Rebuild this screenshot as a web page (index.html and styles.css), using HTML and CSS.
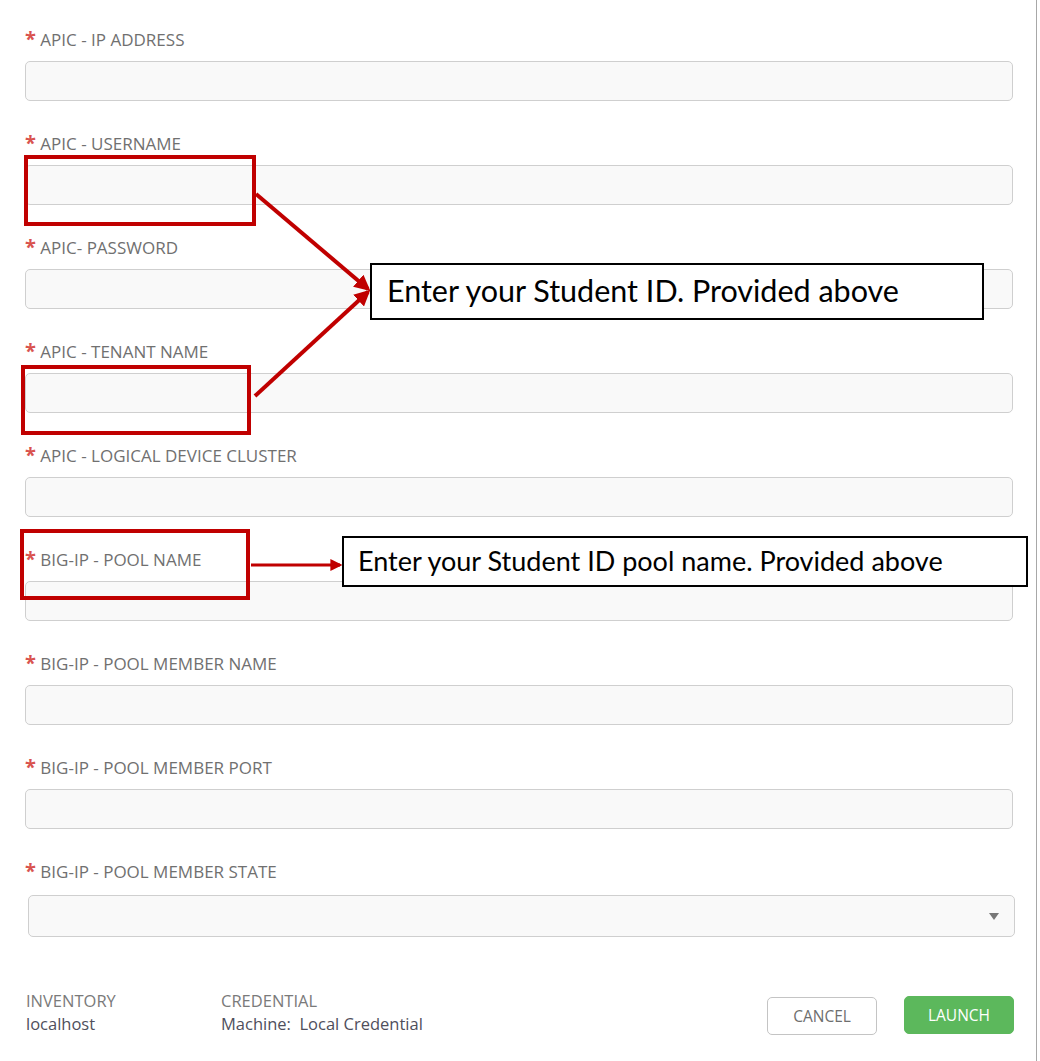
FILE: index.html
```html
<!DOCTYPE html>
<html>
<head>
<meta charset="utf-8">
<link rel="stylesheet" href="styles.css">
</head>
<body>
<div class="page">
  <form class="form">
    <div class="field"><label class="label"><span class="req">*</span> APIC - IP ADDRESS</label><div class="input"></div></div>
    <div class="field"><label class="label"><span class="req">*</span> APIC - USERNAME</label><div class="input"></div></div>
    <div class="field"><label class="label"><span class="req">*</span> APIC- PASSWORD</label><div class="input"></div></div>
    <div class="field"><label class="label"><span class="req">*</span> APIC - TENANT NAME</label><div class="input"></div></div>
    <div class="field"><label class="label"><span class="req">*</span> APIC - LOGICAL DEVICE CLUSTER</label><div class="input"></div></div>
    <div class="field"><label class="label"><span class="req">*</span> BIG-IP - POOL NAME</label><div class="input"></div></div>
    <div class="field"><label class="label"><span class="req">*</span> BIG-IP - POOL MEMBER NAME</label><div class="input"></div></div>
    <div class="field"><label class="label"><span class="req">*</span> BIG-IP - POOL MEMBER PORT</label><div class="input"></div></div>
    <div class="field last"><label class="label"><span class="req">*</span> BIG-IP - POOL MEMBER STATE</label><div class="select"><span class="caret"></span></div></div>
  </form>
  <div class="footer">
    <div class="meta">
      <div class="meta-item"><div class="meta-title">INVENTORY</div><div class="meta-value">localhost</div></div>
      <div class="meta-item"><div class="meta-title">CREDENTIAL</div><div class="meta-value">Machine:&nbsp; Local Credential</div></div>
    </div>
    <div class="buttons">
      <button type="button" class="btn btn-cancel">CANCEL</button>
      <button type="button" class="btn btn-launch">LAUNCH</button>
    </div>
  </div>
</div>

<svg class="annot" width="1040" height="1061" viewBox="0 0 1040 1061">
  <defs>
    <marker id="ah" markerWidth="4" markerHeight="4" refX="3.2" refY="2" orient="auto" markerUnits="strokeWidth">
      <path d="M0,0 L4,2 L0,4 Z" fill="#c00000"/>
    </marker>
  </defs>
  <rect x="26" y="157" width="228" height="67" fill="none" stroke="#c00000" stroke-width="4"/>
  <rect x="23" y="367" width="226" height="66" fill="none" stroke="#c00000" stroke-width="4"/>
  <rect x="22" y="531" width="226" height="67" fill="none" stroke="#c00000" stroke-width="4"/>
  <line x1="256" y1="194" x2="368" y2="289" stroke="#c00000" stroke-width="4" marker-end="url(#ah)"/>
  <line x1="255" y1="396" x2="368" y2="292" stroke="#c00000" stroke-width="4" marker-end="url(#ah)"/>
  <line x1="251" y1="565" x2="340" y2="565" stroke="#c00000" stroke-width="3" marker-end="url(#ah)"/>
</svg>
<div class="note note-1">Enter your Student ID. Provided above</div>
<div class="note note-2">Enter your Student ID pool name. Provided above</div>
</body>
</html>
```
FILE: styles.css
```css
html, body {
  margin: 0;
  padding: 0;
  background: #fff;
}
body {
  font-family: "Open Sans", "Liberation Sans", sans-serif;
  position: relative;
  width: 1040px;
  height: 1061px;
  overflow: hidden;
}
.page {
  width: 1037px;
  height: 1061px;
  border-right: 1px solid #a8a8a8;
  box-sizing: border-box;
  padding: 29px 0 0 25px;
}
.form {
  margin: 0;
  width: 988px;
}
.field {
  margin-bottom: 32px;
}
.field.last {
  margin-bottom: 0;
}
.label {
  display: block;
  font-size: 17px;
  line-height: 22px;
  color: #707070;
  margin-bottom: 10px;
  white-space: nowrap;
}
.req {
  color: #d9534f;
  font-size: 20px;
  font-weight: 700;
  line-height: 0;
}
.input {
  height: 40px;
  box-sizing: border-box;
  border: 1px solid #cfcfcf;
  border-radius: 5px;
  background: #f9f9f9;
}
.select {
  height: 42px;
  box-sizing: border-box;
  margin: 12px 0 0 3px;
  width: 987px;
  border: 1px solid #cfcfcf;
  border-radius: 5px;
  background: #f9f9f9;
  display: flex;
  align-items: center;
  justify-content: flex-end;
  padding-right: 15px;
}
.caret {
  width: 0;
  height: 0;
  border-left: 5px solid transparent;
  border-right: 5px solid transparent;
  border-top: 7px solid #777;
}
.footer {
  margin-top: 52px;
  width: 989px;
  display: flex;
  justify-content: space-between;
  align-items: flex-start;
}
.meta {
  display: flex;
  padding-left: 1px;
}
.meta-item {
  width: 195px;
  font-size: 16.5px;
  line-height: 23px;
  white-space: nowrap;
}
.meta-title {
  color: #7a7a7a;
}
.meta-value {
  color: #4f4f5c;
}
.buttons {
  display: flex;
  gap: 27px;
  padding-top: 8px;
}
.btn {
  font-family: "Open Sans", "Liberation Sans", sans-serif;
  font-size: 15.5px;
  height: 38px;
  width: 110px;
  border-radius: 5px;
  box-sizing: border-box;
  cursor: pointer;
  padding: 0;
}
.btn-cancel {
  background: #fff;
  border: 1px solid #c4c4c4;
  color: #6e6e6e;
}
.btn-launch {
  background: #5cb85c;
  border: 1px solid #5cb85c;
  color: #fff;
  margin-top: -1px;
}
.annot {
  position: absolute;
  left: 0;
  top: 0;
  pointer-events: none;
}
.note {
  position: absolute;
  background: #fff;
  border: 2px solid #000;
  box-sizing: border-box;
  font-family: Lato, "Open Sans", sans-serif;
  color: #000;
  white-space: nowrap;
}
.note-1 {
  left: 370px;
  top: 263px;
  width: 614px;
  height: 57px;
  font-size: 30.5px;
  line-height: 51px;
  padding-left: 15px;
}
.note-2 {
  left: 342px;
  top: 536px;
  width: 686px;
  height: 51px;
  font-size: 27px;
  line-height: 45px;
  padding-left: 14px;
}
```
